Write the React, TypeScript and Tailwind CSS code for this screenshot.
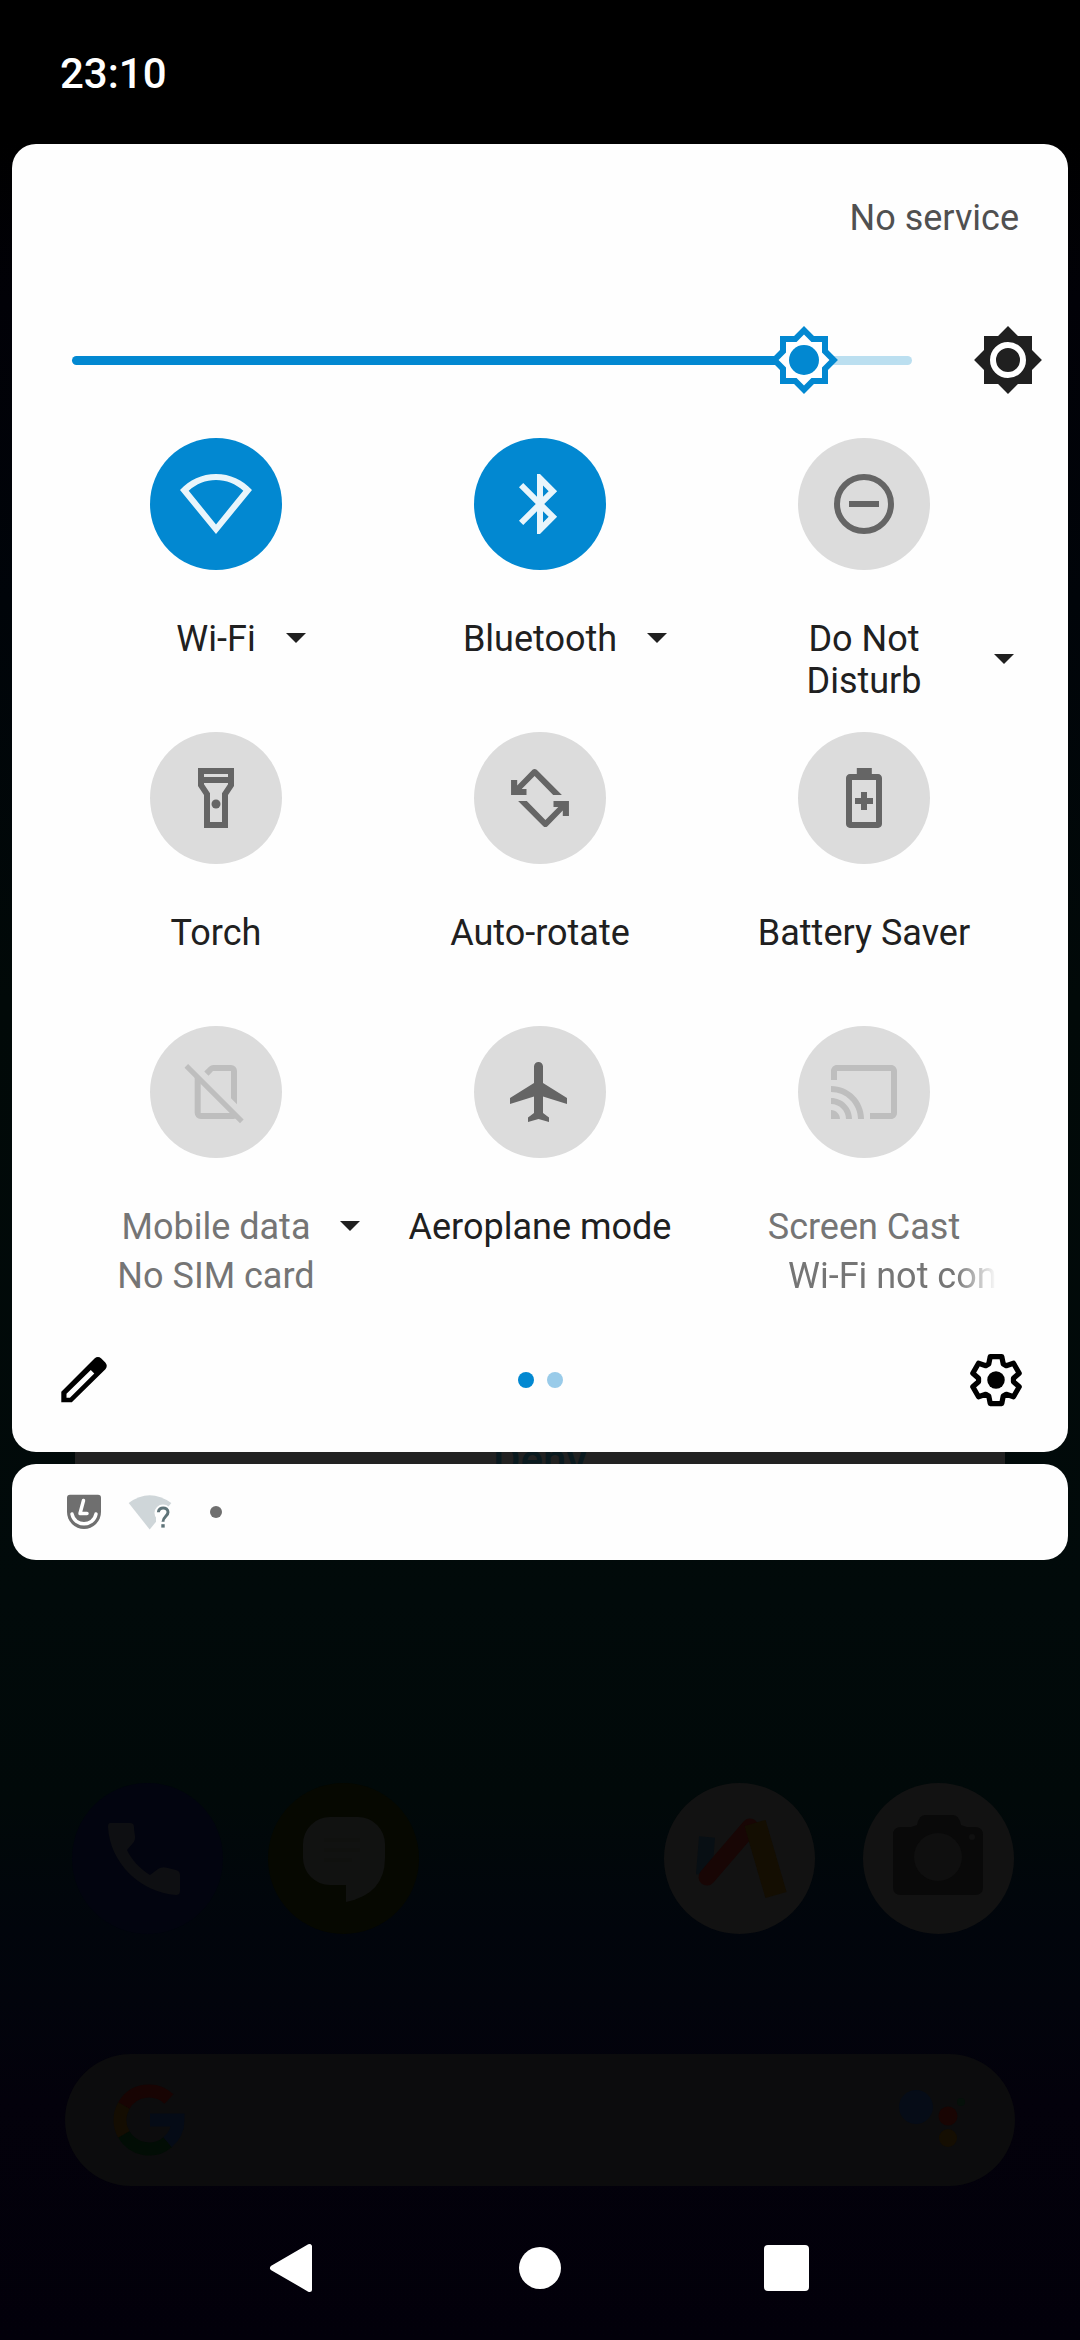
import React from "react";

type TileState = "on" | "off" | "disabled";

interface Tile {
  label: React.ReactNode;
  state: TileState;
  icon: React.ReactNode;
  arrow?: boolean;
  labelWidth?: string;
  status?: string;
  marquee?: boolean;
}

const STAR =
  "M20 8.69V4h-4.69L12 .69 8.69 4H4v4.69L.69 12 4 15.31V20h4.69L12 23.31 15.31 20H20v-4.69L23.31 12 20 8.69z";
const STAR_INNER =
  "M18 14.48V18h-3.52L12 20.48 9.52 18H6v-3.52L3.52 12 6 9.52V6h3.52L12 3.52 14.48 6H18v3.52L20.48 12z";

const ROTATE_HALF =
  "M2.35 6H4.4V7.8L9.5 2.6Q10.2 2 10.9 2.6L19.3 11H16.4L10.2 4.7 5.9 9H7.5V11H2.35z";

const GEAR_POINTS = [0, 60, 120, 180, 240, 300]
  .flatMap((deg) => {
    const a = (deg * Math.PI) / 180;
    return [
      [-2.9, -6.4],
      [-2.3, -9.4],
      [2.3, -9.4],
      [2.9, -6.4],
    ].map(
      ([x, y]) =>
        `${(12 + x * Math.cos(a) - y * Math.sin(a)).toFixed(2)},${(12 + x * Math.sin(a) + y * Math.cos(a)).toFixed(2)}`,
    );
  })
  .join(" ");

const tiles: Tile[] = [
  {
    label: "Wi-Fi",
    state: "on",
    arrow: true,
    icon: (
      <path
        fillRule="evenodd"
        d="M12 2C7.3 2 3.1 4 0 7.33L12 22 24 7.33C20.9 4 16.7 2 12 2zM12 4c3.4 0 6.6 1.3 9.1 3.6L12 18.8 2.9 7.6C5.4 5.3 8.6 4 12 4z"
      />
    ),
  },
  {
    label: "Bluetooth",
    state: "on",
    arrow: true,
    icon: (
      <path d="M17.71 7.71L12 2h-1v7.59L6.41 5 5 6.41 10.59 12 5 17.59 6.41 19 11 14.41V22h1l5.71-5.71-4.3-4.29 4.3-4.29zM13 5.83l1.88 1.88L13 9.59V5.83zm1.88 10.46L13 18.17v-3.76l1.88 1.88z" />
    ),
  },
  {
    label: (
      <>
        Do Not
        <br />
        Disturb
      </>
    ),
    state: "off",
    arrow: true,
    labelWidth: "w-[200px]",
    icon: (
      <>
        <circle cx="12" cy="12" r="9" fill="none" stroke="currentColor" strokeWidth="2" />
        <rect x="7" y="11" width="10" height="2" />
      </>
    ),
  },
  {
    label: "Torch",
    state: "off",
    icon: (
      <>
        <path d="M18 2H6v6l2 3v11h8V11l2-3V2zm-2 2v1H8V4h8zm-2 6.4V20h-4v-9.61l-2-3V7h8v.39l-2 3.01z" />
        <circle cx="12" cy="14" r="1.5" />
      </>
    ),
  },
  {
    label: "Auto-rotate",
    state: "off",
    icon: (
      <>
        <path d={ROTATE_HALF} />
        <path d={ROTATE_HALF} transform="rotate(180 12 12)" />
      </>
    ),
  },
  {
    label: "Battery Saver",
    state: "off",
    icon: (
      <path
        fillRule="evenodd"
        d="M9.6 2h5v2h2.1c.7 0 1.3.6 1.3 1.3v15.4c0 .7-.6 1.3-1.3 1.3H7.3c-.7 0-1.3-.6-1.3-1.3V5.3c0-.7.6-1.3 1.3-1.3h2.3zM8 6v14h8V6zM11 10h2v2h2v2h-2v2h-2v-2H9v-2h2z"
      />
    ),
  },
  {
    label: "Mobile data",
    state: "disabled",
    arrow: true,
    status: "No SIM card",
    icon: (
      <>
        <path d="M4.9 6.2L6.9 8.2V19H17.8L19.4 20.6 17.8 21H6.9a2 2 0 0 1-2-2z" />
        <path d="M8.1 5.2L9.7 3.6Q10.3 3 11.1 3H17a2 2 0 0 1 2 2V16.1l-2-2V5H11L9.5 6.6z" />
        <path d="M2.1 3.3L20.6 21.8" stroke="currentColor" strokeWidth="1.7" />
      </>
    ),
  },
  {
    label: "Aeroplane mode",
    state: "off",
    icon: (
      <path d="M21 16v-2l-8-5V3.5c0-.83-.67-1.5-1.5-1.5S10 2.67 10 3.5V9l-8 5v2l8-2.5V19l-2 1.5V22l3.5-1 3.5 1v-1.5L13 19v-5.5l8 2.5z" />
    ),
  },
  {
    label: "Screen Cast",
    state: "disabled",
    status: "Wi-Fi not connected",
    marquee: true,
    icon: (
      <path d="M21 3H3c-1.1 0-2 .9-2 2v3h2V5h18v14h-7v2h7c1.1 0 2-.9 2-2V5c0-1.1-.9-2-2-2zM1 18v3h3c0-1.66-1.34-3-3-3zm0-4v2c2.76 0 5 2.24 5 5h2c0-3.87-3.13-7-7-7zm0-4v2c4.97 0 9 4.03 9 9h2c0-6.08-4.93-11-11-11z" />
    ),
  },
];

const circleStyle: Record<TileState, string> = {
  on: "bg-[#0288d1] text-[#e9f5fb]",
  off: "bg-[#dcdcdc] text-[#656565]",
  disabled: "bg-[#dcdcdc] text-[#bebebe]",
};

function QuickTile({ tile }: { tile: Tile }) {
  const disabled = tile.state === "disabled";
  return (
    <div className="flex h-[294px] flex-col items-center">
      <div
        className={`flex size-[132px] shrink-0 items-center justify-center rounded-full ${circleStyle[tile.state]}`}
      >
        <svg viewBox="0 0 24 24" className="size-[72px]" fill="currentColor">
          {tile.icon}
        </svg>
      </div>
      <div
        className={`relative mt-12 text-center text-[36px] leading-[42px] whitespace-nowrap ${tile.labelWidth ?? ""} ${disabled ? "text-[#757575]" : "text-[#202020]"}`}
      >
        {tile.label}
        {tile.arrow && (
          <svg
            viewBox="0 0 24 24"
            className="absolute top-1/2 left-full -mt-[26px] ml-4 size-12 text-[#202020]"
            fill="currentColor"
          >
            <path d="M7 10l5 5 5-5z" />
          </svg>
        )}
      </div>
      {tile.status &&
        (tile.marquee ? (
          <div className="mt-[7px] ml-[57px] w-[209px] overflow-hidden text-[36px] leading-[42px] whitespace-nowrap text-[#757575] [mask-image:linear-gradient(to_right,black_80%,transparent)]">
            {tile.status}
          </div>
        ) : (
          <div className="mt-[7px] text-[36px] leading-[42px] whitespace-nowrap text-[#757575]">
            {tile.status}
          </div>
        ))}
    </div>
  );
}

function BrightnessRow() {
  return (
    <div className="flex h-[72px] items-center pr-6 pl-[60px]">
      <div className="relative flex h-[72px] w-[840px] items-center">
        <div className="h-[9px] w-[732px] rounded-l-full bg-[#0288d1]" />
        <div className="h-[9px] w-[108px] rounded-r-full bg-[#bbdff0]" />
        <svg viewBox="0 0 24 24" className="absolute top-0 left-[696px] size-[72px]">
          <path d={STAR} fill="#0288d1" />
          <path d={STAR_INNER} fill="#fff" />
          <circle cx="12" cy="12" r="5" fill="#0288d1" />
        </svg>
      </div>
      <svg viewBox="0 0 24 24" className="ml-auto size-[72px]">
        <path d={STAR} fill="#202020" />
        <circle cx="12" cy="12" r="5" fill="none" stroke="#fff" strokeWidth="2" />
      </svg>
    </div>
  );
}

function PanelFooter() {
  return (
    <div className="mt-auto mb-[42px] flex h-[60px] items-center justify-between px-[42px]">
      <svg viewBox="0 0 60 60" className="size-[60px]">
        <path
          fillRule="evenodd"
          d="M7.3 52.3V41.7L40.5 8.5Q44 5.6 47.3 8.5L51.3 12.5Q54.2 15.8 51.4 19.3L17.8 52.3zM12.5 47.7H15.9L40.3 23.5 36.8 20 12.5 43.7z"
        />
      </svg>
      <div className="flex gap-[13px]">
        <div className="size-4 rounded-full bg-[#0288d1]" />
        <div className="size-4 rounded-full bg-[#99cbe9]" />
      </div>
      <svg viewBox="0 0 24 24" className="size-[60px]">
        <polygon points={GEAR_POINTS} fill="none" stroke="#000" strokeWidth="2.1" strokeLinejoin="round" />
        <circle cx="12" cy="12" r="3.5" />
      </svg>
    </div>
  );
}

function NotificationStrip() {
  return (
    <div className="mx-3 flex h-24 items-center rounded-[24px] bg-[#fefefe] pl-[54px]">
      <svg viewBox="0 0 36 36" className="size-9">
        <path d="M4 .7H32Q35 .7 35 3.7V18a17 17 0 0 1-34 0V3.7Q1 .7 4 .7z" fill="#6f6f6f" />
        <path
          d="M17.5 6.5L14 19.5H21M6 20C8.5 33 27.5 33 30 20"
          fill="none"
          stroke="#fff"
          strokeWidth="3.5"
          strokeLinecap="round"
          strokeLinejoin="round"
        />
      </svg>
      <svg viewBox="0 0 44 36" className="ml-[26px] h-9 w-11">
        <path d="M.7 9Q21.5-6.5 43.3 9L21.7 35.5z" fill="#cfd6d9" />
        <circle cx="35" cy="19" r="8.5" fill="#fefefe" />
        <path d="M28 19H44V36H28z" fill="#fefefe" />
        <path
          d="M30.4 18.3C30.4 12.4 40 12.6 40 18.2C40 22.2 35 22.4 35 27.8"
          fill="none"
          stroke="#5e7378"
          strokeWidth="3"
        />
        <rect x="33.3" y="30.2" width="3.4" height="3.4" fill="#5e7378" />
      </svg>
      <div className="ml-[38px] size-3 rounded-full bg-[#6f6f6f]" />
    </div>
  );
}

function Dock() {
  return (
    <div className="mt-[223px] flex h-[151px] pl-[72px]">
      <div className="flex size-[151px] items-center justify-center rounded-full bg-[#02040f]">
        <svg viewBox="0 0 72 72" className="mr-2 size-[72px]" fill="#0e0f12">
          <path d="M2 0H22Q26 0 26 4C26 10 29 16 25 20L19 27C23 36 32 46 42 52L50 46Q54 43 60 45L68 47Q72 48 72 52V68Q72 72 68 72C32 69 2 40 0 4Q0 0 2 0z" />
        </svg>
      </div>
      <div className="ml-[45px] flex size-[151px] items-center justify-center rounded-full bg-[#060801]">
        <svg viewBox="0 0 84 86" className="h-[86px] w-[84px]">
          <path
            d="M28 1H56A27 27 0 0 1 83 28V42Q83 78 44 86V69H28A27 27 0 0 1 1 42V28A27 27 0 0 1 28 1z"
            fill="#111211"
          />
          <path d="M22 24h36M22 34h36M22 44h28" stroke="#10110f" strokeWidth="4" />
        </svg>
      </div>
      <div className="ml-[245px] size-[151px] overflow-hidden rounded-full bg-[#121212]">
        <svg viewBox="0 0 151 151" className="size-full" fill="none">
          <path d="M43 54L40 92" stroke="#080f14" strokeWidth="16" />
          <path d="M86 44L43 94" stroke="#180605" strokeWidth="17" strokeLinecap="round" />
          <path d="M91 40L112 112" stroke="#140e02" strokeWidth="22" />
        </svg>
      </div>
      <div className="ml-12 size-[151px] overflow-hidden rounded-full bg-[#121212]">
        <svg viewBox="0 0 151 151" className="size-full">
          <path
            d="M54 42Q56 32 62 32H90Q96 32 98 42L104 44H112Q120 44 120 52V104Q120 112 112 112H38Q30 112 30 104V52Q30 44 38 44H48z"
            fill="#090909"
          />
          <circle cx="75" cy="74" r="24" fill="#0f0f0f" />
          <circle cx="109" cy="54" r="3" fill="#101010" />
        </svg>
      </div>
    </div>
  );
}

function SearchBar() {
  return (
    <div className="mx-auto mt-[120px] flex h-[132px] w-[950px] items-center justify-between rounded-full bg-[#0c0c0d] px-12">
      <svg viewBox="0 0 72 72" className="size-[72px]" fill="none" strokeWidth="13">
        <path d="M56 15A29 29 0 0 0 10.9 21.5" stroke="#180403" />
        <path d="M10.9 21.5A29 29 0 0 0 10.9 50.5" stroke="#140d02" />
        <path d="M10.9 50.5A29 29 0 0 0 54.6 58.2" stroke="#020d05" />
        <path d="M54.6 58.2A29 29 0 0 0 65 36H37" stroke="#050b16" />
      </svg>
      <svg viewBox="0 0 72 66" className="h-[66px] w-[72px]">
        <circle cx="21" cy="20" r="17" fill="#060c17" />
        <circle cx="53" cy="29" r="9.5" fill="#190503" />
        <circle cx="66" cy="15" r="4" fill="#06100a" />
        <circle cx="53" cy="51" r="9" fill="#150e02" />
      </svg>
    </div>
  );
}

function NavigationBar() {
  return (
    <div className="mt-auto flex h-36 items-center pl-[267px]">
      <svg viewBox="0 0 48 50" className="h-[50px] w-12">
        <path
          d="M5.5 25L42.5 3.5V46.5z"
          fill="#fff"
          stroke="#fff"
          strokeWidth="5"
          strokeLinejoin="round"
        />
      </svg>
      <div className="ml-[204px] size-[42px] rounded-full bg-white" />
      <div className="ml-[203px] h-[46px] w-[45px] rounded-[4px] bg-white" />
    </div>
  );
}

export default function App() {
  return (
    <div className="flex h-[2340px] w-[1080px] flex-col overflow-hidden bg-[linear-gradient(to_bottom,#000_0px,#000_140px,#010107_300px,#000409_600px,#010908_1000px,#010a0a_1600px,#010909_1800px,#01050c_1930px,#02040c_2000px,#03010b_2100px,#02000a_2340px)] font-[Roboto,sans-serif]">
      <div className="flex h-36 items-center px-[60px] pt-1">
        <span className="text-[42px] leading-[50px] font-medium text-white">23:10</span>
      </div>

      <div className="mx-3 flex h-[1308px] flex-col rounded-[24px] bg-[#fefefe]">
        <div className="mt-[53px] mb-[85px] pr-[49px] text-right text-[36px] leading-[42px] text-[#505050]">
          No service
        </div>
        <BrightnessRow />
        <div className="mt-[42px] grid w-[972px] grid-cols-3 self-center">
          {tiles.map((tile, i) => (
            <QuickTile key={i} tile={tile} />
          ))}
        </div>
        <PanelFooter />
      </div>

      <div className="mx-[75px] h-3 overflow-hidden bg-[#222] text-center text-[42px] leading-[12px] font-medium text-[#0a1a1f]">
        <span className="relative top-[2px]">Deny</span>
      </div>

      <NotificationStrip />
      <Dock />
      <SearchBar />
      <NavigationBar />
    </div>
  );
}
